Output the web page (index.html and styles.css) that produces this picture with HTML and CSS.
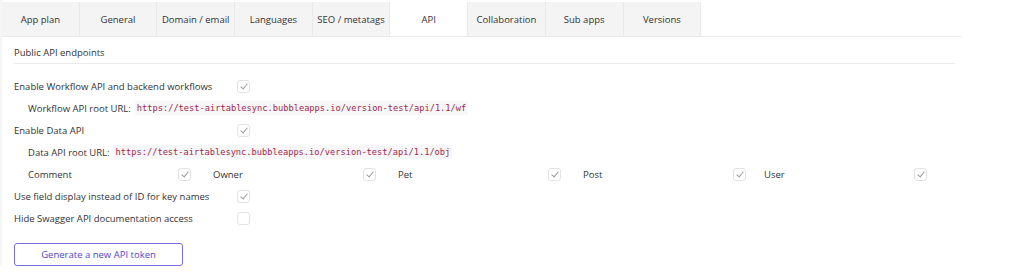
FILE: index.html
```html
<!DOCTYPE html>
<html lang="en">
<head>
  <meta charset="UTF-8">
  <title>Settings - API</title>
  <link rel="stylesheet" href="styles.css">
</head>
<body>

<!-- Settings tabs -->
<div class="tabs">
  <div class="tab">App plan</div>
  <div class="tab">General</div>
  <div class="tab">Domain / email</div>
  <div class="tab">Languages</div>
  <div class="tab">SEO / metatags</div>
  <div class="tab active">API</div>
  <div class="tab">Collaboration</div>
  <div class="tab">Sub apps</div>
  <div class="tab">Versions</div>
</div>

<!-- API section -->
<div class="panel">
  <div class="section-title">Public API endpoints</div>

  <div class="row">
    <span class="label">Enable Workflow API and backend workflows</span>
    <span class="check on"></span>
  </div>
  <div class="row sub">
    <span>Workflow API root URL:</span>
    <code>https://test-airtablesync.bubbleapps.io/version-test/api/1.1/wf</code>
  </div>
  <div class="row">
    <span class="label">Enable Data API</span>
    <span class="check on"></span>
  </div>
  <div class="row sub">
    <span>Data API root URL:</span>
    <code>https://test-airtablesync.bubbleapps.io/version-test/api/1.1/obj</code>
  </div>

  <div class="types">
    <div class="type"><span class="type-name">Comment</span><span class="check on"></span></div>
    <div class="type"><span class="type-name">Owner</span><span class="check on"></span></div>
    <div class="type"><span class="type-name">Pet</span><span class="check on"></span></div>
    <div class="type"><span class="type-name">Post</span><span class="check on"></span></div>
    <div class="type"><span class="type-name">User</span><span class="check on"></span></div>
  </div>

  <div class="row">
    <span class="label">Use field display instead of ID for key names</span>
    <span class="check on"></span>
  </div>
  <div class="row">
    <span class="label">Hide Swagger API documentation access</span>
    <span class="check"></span>
  </div>

  <button class="token-btn">Generate a new API token</button>
</div>

</body>
</html>
```

FILE: styles.css
```css
/* General */
* {
  box-sizing: border-box;
}
body {
  margin: 0;
  font-family: "Open Sans", Arial, sans-serif;
  font-size: 9.5px;
  color: #333;
  background: #fff;
  border-left: 2px solid #f6f6f6;
}

/* Tabs */
.tabs {
  display: flex;
  width: 960px;
  margin-top: 2px;
  border-bottom: 1px solid #ececec;
}
.tab {
  width: 77.7px;
  height: 34px;
  padding-top: 2px;
  line-height: 32px;
  text-align: center;
  background: #f4f4f4;
  border-right: 1px solid #e9e9e9;
  white-space: nowrap;
}
.tab.active {
  background: #fff;
}

/* Panel */
.panel {
  padding: 0 0 0 12px;
  width: 953px;
}
.section-title {
  height: 27px;
  padding-top: 4px;
  line-height: 23px;
  border-bottom: 1px solid #ececec;
  margin-bottom: 11px;
}

.row {
  display: flex;
  align-items: center;
  height: 22px;
}
.row .label {
  width: 223px;
}
.row.sub {
  padding-left: 14px;
}
.row.sub code {
  margin-left: 4px;
}

code {
  font-family: "DejaVu Sans Mono", "Liberation Mono", monospace;
  font-size: 8.7px;
  color: #a0264f;
  background: #f7f7f7;
  padding: 2px 2px;
  border-radius: 2px;
}

/* Checkbox */
.check {
  width: 13px;
  height: 13px;
  border: 1px solid #e2e2e2;
  border-radius: 3px;
  background: #fff;
  position: relative;
}
.check.on::after {
  content: "";
  position: absolute;
  left: 3.5px;
  top: 1.5px;
  width: 3px;
  height: 6px;
  border: solid #9a9a9a;
  border-width: 0 1.5px 1.5px 0;
  transform: rotate(40deg);
}

/* Data types */
.types {
  display: grid;
  grid-template-columns: 185px 185px 185px 181px 185px;
  padding-left: 14px;
  height: 22px;
  align-items: center;
}
.type {
  display: flex;
  align-items: center;
}
.type-name {
  width: 150px;
}

/* Button */
.token-btn {
  margin-top: 14px;
  width: 169px;
  height: 23px;
  font-family: "Open Sans", Arial, sans-serif;
  font-size: 9.5px;
  color: #5046cc;
  background: #fff;
  border: 1px solid #7670e0;
  border-radius: 3px;
}
```
